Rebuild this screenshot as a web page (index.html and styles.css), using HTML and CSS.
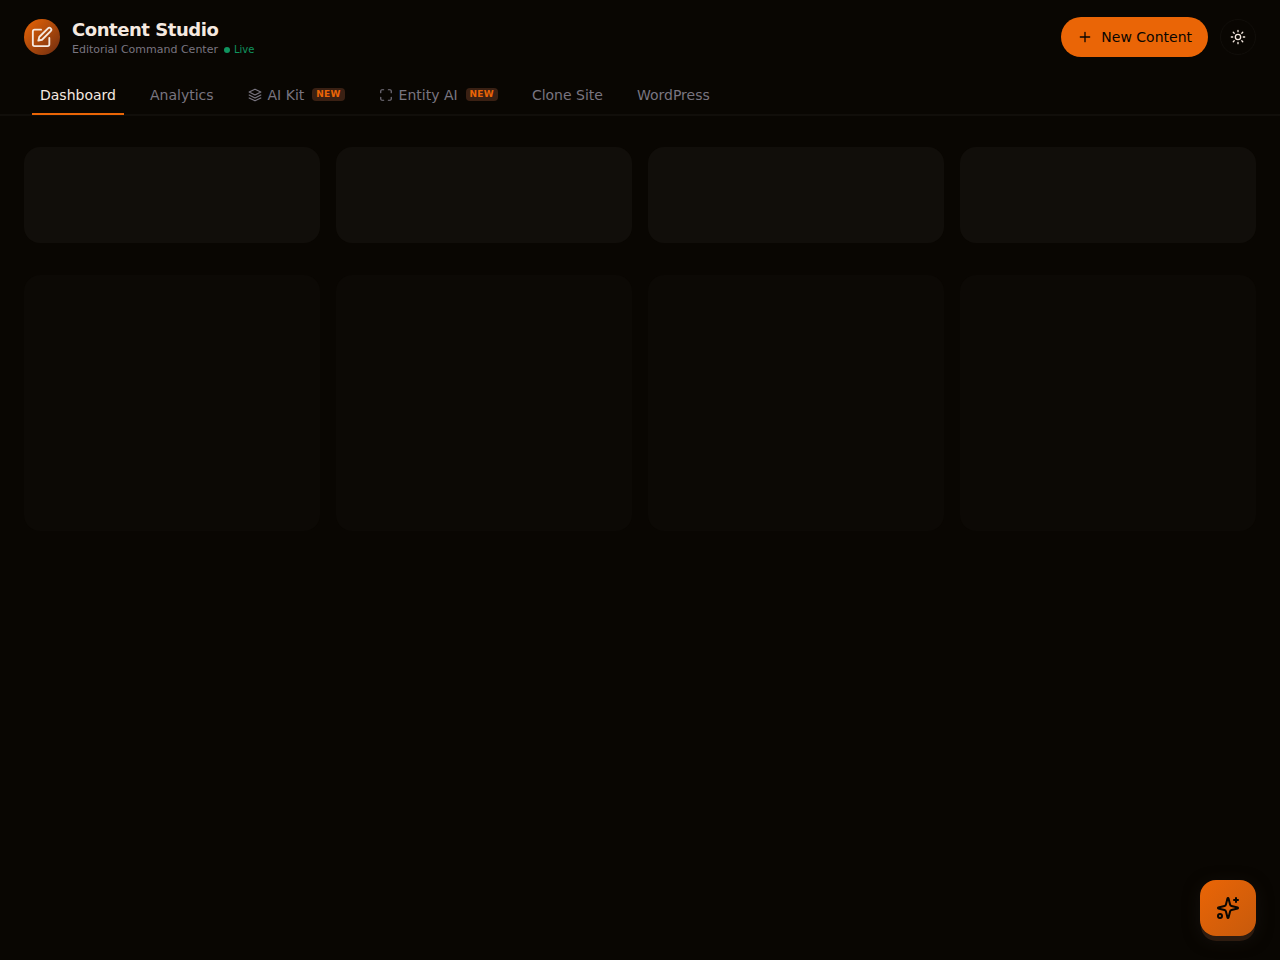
FILE: index.html
```html
<!DOCTYPE html>
<html lang="en">
<head>
  <meta charset="UTF-8">
  <meta name="viewport" content="width=device-width, initial-scale=1">
  <title>Content Studio</title>
  <link rel="stylesheet" href="styles.css">
</head>
<body>
  <header class="header">
    <div class="topbar">
      <div class="brand">
        <div class="logo">
          <svg class="icon" width="22" height="22" viewBox="0 0 24 24">
            <path d="M11 4H4a2 2 0 0 0-2 2v14a2 2 0 0 0 2 2h14a2 2 0 0 0 2-2v-7"/>
            <path d="M18.5 2.5a2.121 2.121 0 0 1 3 3L12 15l-4 1 1-4 9.500-9.500z"/>
          </svg>
        </div>
        <div>
          <h1 class="title">Content Studio</h1>
          <div class="subtitle">
            <span>Editorial Command Center</span>
            <span class="live"><span class="live-dot"></span>Live</span>
          </div>
        </div>
      </div>
      <div class="actions">
        <button class="new-btn" type="button">
          <svg class="icon" width="16" height="16" viewBox="0 0 24 24"><path d="M12 5v14M5 12h14"/></svg>
          New Content
        </button>
        <button class="theme-btn" type="button" aria-label="Toggle theme">
          <svg class="icon" width="16" height="16" viewBox="0 0 24 24">
            <circle cx="12" cy="12" r="4"/>
            <path d="M12 2v2M12 20v2M4.900 4.900l1.400 1.400M17.700 17.700l1.400 1.400M2 12h2M20 12h2M6.300 17.700l-1.400 1.400M19.100 4.900l-1.400 1.400"/>
          </svg>
        </button>
      </div>
    </div>
    <nav class="tabs">
      <a class="tab active" href="#dashboard">Dashboard</a>
      <a class="tab" href="#analytics">Analytics</a>
      <a class="tab" href="#ai-kit">
        <svg class="icon" width="14" height="14" viewBox="0 0 24 24">
          <path d="M12 2L2 7l10 5 10-5-10-5z"/>
          <path d="M2 17l10 5 10-5"/>
          <path d="M2 12l10 5 10-5"/>
        </svg>
        AI Kit
        <span class="badge">NEW</span>
      </a>
      <a class="tab" href="#entity-ai">
        <svg class="icon" width="14" height="14" viewBox="0 0 24 24">
          <path d="M8 3H5a2 2 0 0 0-2 2v3M21 8V5a2 2 0 0 0-2-2h-3M16 21h3a2 2 0 0 0 2-2v-3M3 16v3a2 2 0 0 0 2 2h3"/>
        </svg>
        Entity AI
        <span class="badge">NEW</span>
      </a>
      <a class="tab" href="#clone-site">Clone Site</a>
      <a class="tab" href="#wordpress">WordPress</a>
    </nav>
  </header>

  <main class="content">
    <div class="grid">
      <div class="skeleton stat"></div>
      <div class="skeleton stat"></div>
      <div class="skeleton stat"></div>
      <div class="skeleton stat"></div>
    </div>
    <div class="grid">
      <div class="skeleton column"></div>
      <div class="skeleton column"></div>
      <div class="skeleton column"></div>
      <div class="skeleton column"></div>
    </div>
  </main>

  <button class="fab" type="button" aria-label="AI assistant">
    <svg class="icon" width="24" height="24" viewBox="0 0 24 24">
      <path d="M9.937 15.500A2 2 0 0 0 8.500 14.063l-6.135-1.582a.5.5 0 0 1 0-.962L8.500 9.936A2 2 0 0 0 9.937 8.500l1.582-6.135a.5.5 0 0 1 .963 0L14.063 8.500A2 2 0 0 0 15.500 9.937l6.135 1.581a.5.5 0 0 1 0 .964L15.500 14.063a2 2 0 0 0-1.437 1.437l-1.582 6.135a.5.5 0 0 1-.963 0z"/>
      <path d="M20 2v4M22 4h-4"/>
      <circle cx="4" cy="20" r="2"/>
    </svg>
  </button>
</body>
</html>
```
FILE: styles.css
```css
* {
  box-sizing: border-box;
}
body {
  margin: 0;
  min-height: 100vh;
  background: #090602;
  color: #f5e9e0;
  font-family: "DejaVu Sans", sans-serif;
  font-size: 14px;
}
button {
  font: inherit;
  border: 0;
  padding: 0;
  cursor: pointer;
}
.icon {
  flex: none;
  fill: none;
  stroke: currentColor;
  stroke-width: 2;
  stroke-linecap: round;
  stroke-linejoin: round;
}

/* header */
.header {
  border-bottom: 1px solid #110e0a;
}
.topbar {
  display: flex;
  align-items: center;
  justify-content: space-between;
  height: 74px;
  padding: 0 24px;
}
.brand {
  display: flex;
  align-items: center;
  gap: 12px;
}
.logo {
  display: flex;
  align-items: center;
  justify-content: center;
  width: 36px;
  height: 36px;
  border-radius: 50%;
  background: linear-gradient(135deg, #ea6506, #6e2c10);
}
.title {
  margin: 0;
  font-size: 18px;
  line-height: 26px;
  letter-spacing: -0.025em;
}
.subtitle {
  display: flex;
  align-items: flex-end;
  gap: 6px;
  font-size: 11px;
  line-height: 14px;
  color: #797580;
}
.live {
  display: flex;
  align-items: center;
  gap: 4px;
  font-size: 10px;
  color: #10945f;
}
.live-dot {
  width: 6px;
  height: 6px;
  border-radius: 50%;
  background: #10945f;
}
.actions {
  display: flex;
  align-items: center;
  gap: 12px;
}
.new-btn {
  display: flex;
  align-items: center;
  gap: 8px;
  height: 40px;
  padding: 0 16px;
  border-radius: 20px;
  background: #ea6506;
  color: #090602;
}
.theme-btn {
  display: flex;
  align-items: center;
  justify-content: center;
  width: 36px;
  height: 36px;
  border: 1px solid #110e0a;
  border-radius: 50%;
  background: none;
  color: #f5e9e0;
}

/* tabs */
.tabs {
  display: flex;
  gap: 2px;
  padding: 0 24px;
  border-bottom: 1px solid #110e0a;
}
.tab {
  position: relative;
  display: flex;
  align-items: center;
  gap: 6px;
  height: 41px;
  margin-bottom: -1px;
  padding: 0 16px;
  color: #797580;
  text-decoration: none;
  white-space: nowrap;
}
.tab.active {
  color: #f5e9e0;
}
.tab.active::after {
  content: "";
  position: absolute;
  left: 8px;
  right: 8px;
  bottom: 0;
  height: 2px;
  background: #ea6506;
}
.badge {
  margin-left: 2px;
  padding: 0 4px;
  border-radius: 4px;
  background: #3a2013;
  color: #ea6506;
  font-size: 9px;
  font-weight: bold;
  line-height: 13px;
  letter-spacing: 0.025em;
}

/* loading placeholders */
.content {
  display: flex;
  flex-direction: column;
  gap: 32px;
  padding: 31px 24px;
}
.grid {
  display: grid;
  grid-template-columns: repeat(4, 1fr);
  gap: 16px;
}
.skeleton {
  border-radius: 16px;
}
.stat {
  height: 96px;
  background: #110e0a;
}
.column {
  height: 256px;
  background: #0c0905;
}

/* floating assistant button */
.fab {
  position: fixed;
  right: 24px;
  bottom: 24px;
  display: flex;
  align-items: center;
  justify-content: center;
  width: 56px;
  height: 56px;
  border-radius: 16px;
  background: linear-gradient(135deg, #ea6506, #c75a0c);
  color: #090602;
  box-shadow: 0 6px 0 -1px #2e1c10, 0 4px 16px #15110d;
}
```
